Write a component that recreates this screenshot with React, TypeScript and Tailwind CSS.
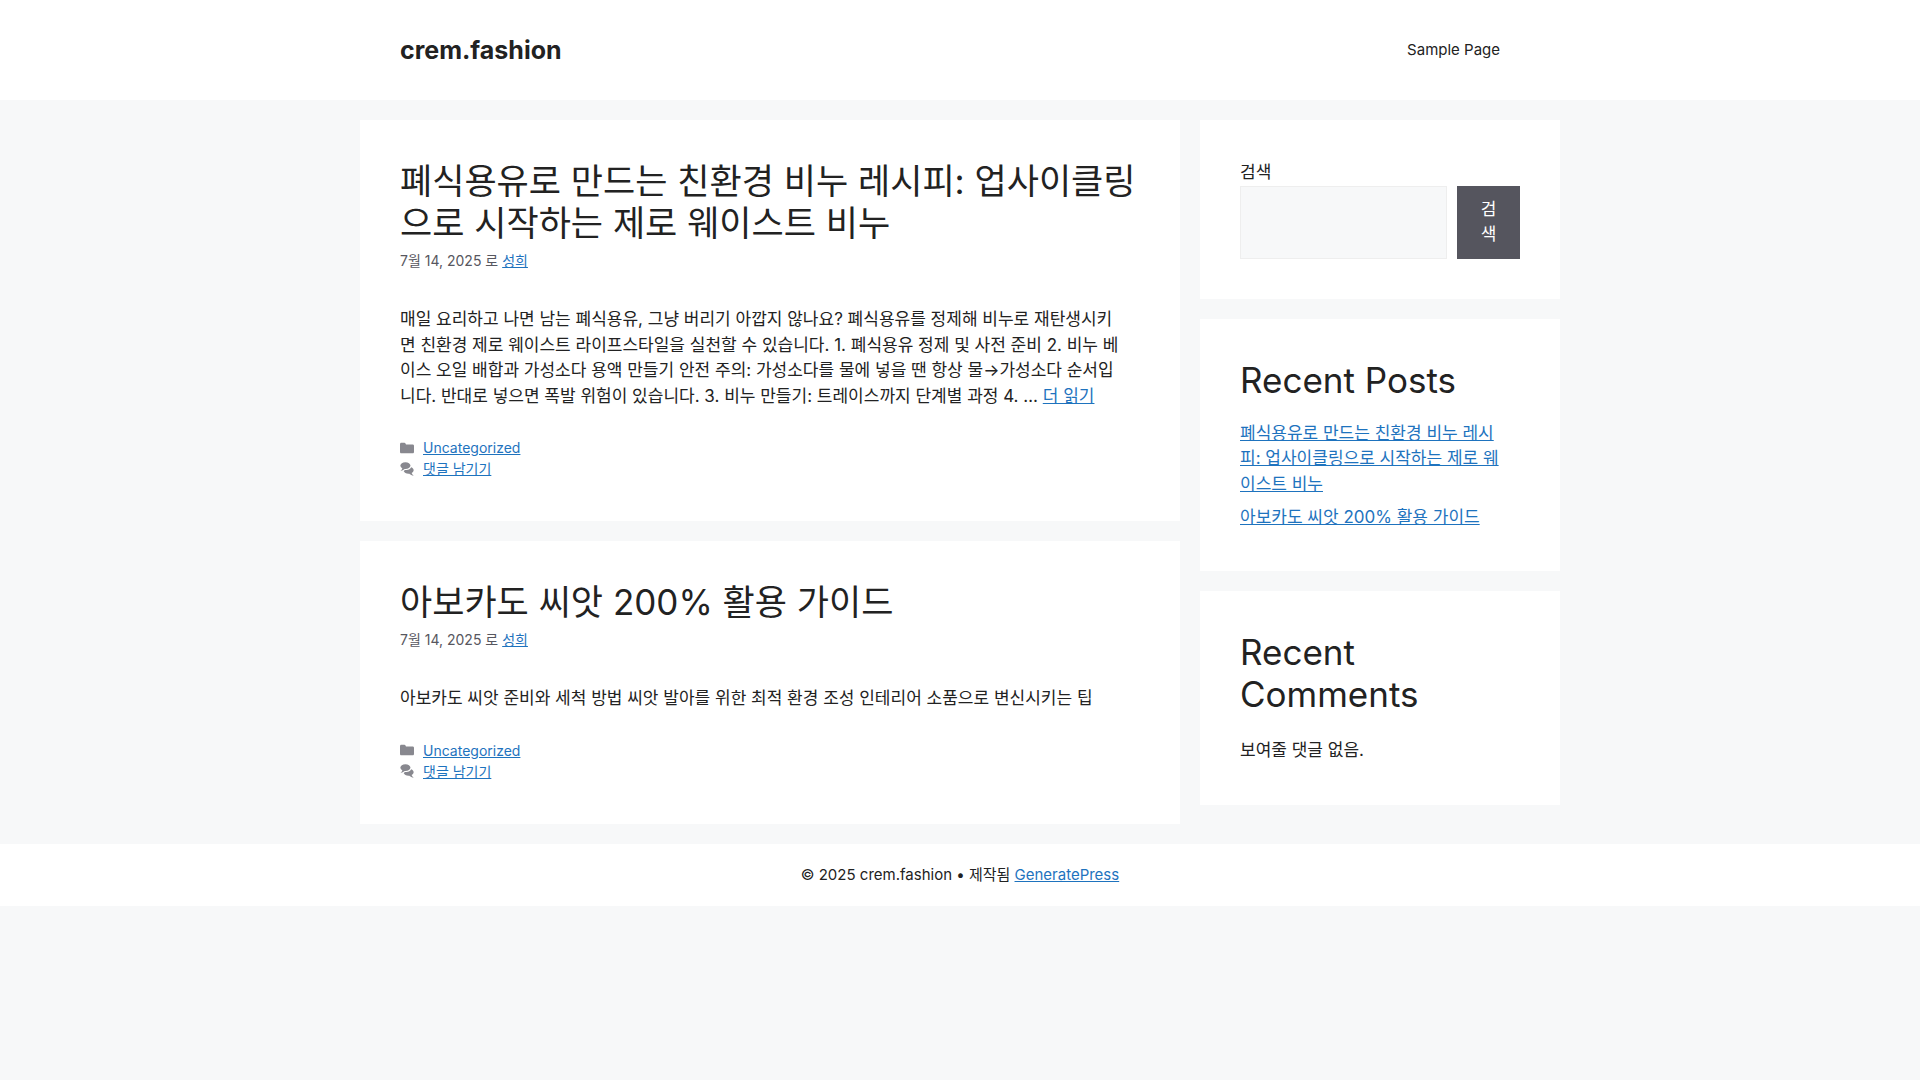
import type { ReactNode } from "react";

const link = "text-[#1e73be] underline";

function FolderIcon() {
  return (
    <svg viewBox="0 0 512 512" className="h-[14px] w-[14px] fill-current" aria-hidden="true">
      <path d="M0 112c0-26.510 21.490-48 48-48h110.014a48 48 0 0143.592 27.907l12.349 26.791A16 16 0 00228.486 128H464c26.510 0 48 21.490 48 48v224c0 26.510-21.490 48-48 48H48c-26.510 0-48-21.490-48-48V112z" />
    </svg>
  );
}

function CommentsIcon() {
  return (
    <svg viewBox="0 0 512 512" className="h-[14px] w-[14px] fill-current" aria-hidden="true">
      <path d="M132.838 329.973a435.298 435.298 0 0016.769-9.004c13.363-7.574 26.587-16.142 37.419-25.507 7.544.597 15.270.925 23.098.925 54.905 0 105.634-15.311 143.285-41.280 23.728-16.365 43.115-37.692 54.155-62.645 54.739 22.205 91.498 63.272 91.498 110.286 0 42.186-29.558 79.498-75.090 102.828 23.460 49.216 75.090 101.709 75.090 101.709s-115.837-38.350-154.424-78.460c-9.956 1.120-20.297 1.758-30.793 1.758-88.727 0-162.927-43.071-181.007-100.610z" />
      <path d="M383.371 132.502c0 70.603-82.961 127.787-185.216 127.787-10.496 0-20.837-.639-30.793-1.757-38.587 40.093-154.424 78.429-154.424 78.429s51.630-52.472 75.090-101.670c-45.532-23.321-75.090-60.619-75.090-102.790C12.938 61.900 95.900 4.716 198.155 4.716 300.410 4.715 383.370 61.900 383.370 132.502z" />
    </svg>
  );
}

function Post({ title, children }: { title: string; children: ReactNode }) {
  return (
    <article className="bg-white px-10 pt-10 pb-[42px]">
      <h2 className="text-[35px] leading-[42px]">
        <a href="#post">{title}</a>
      </h2>
      <p className="mt-1.5 text-[14px] leading-[21px] text-[#575760]">
        7월 14, 2025 로 <a href="#author" className={link}>성희</a>
      </p>
      <p className="mt-9">{children}</p>
      <footer className="mt-7 flex flex-col text-[14px] leading-[21px] text-[#575760]">
        <div className="flex items-center gap-[9px]">
          <span className="opacity-70"><FolderIcon /></span>
          <a href="#category" className={link}>Uncategorized</a>
        </div>
        <div className="flex items-center gap-[9px]">
          <span className="opacity-70"><CommentsIcon /></span>
          <a href="#comments" className={link}>댓글 남기기</a>
        </div>
      </footer>
    </article>
  );
}

export default function App() {
  return (
    <div className="min-h-screen bg-[#f7f8f9] font-[Inter,'Noto_Sans_CJK_KR',sans-serif] text-[17px] leading-normal text-[#222222]">
      <header className="bg-white">
        <div className="mx-auto flex max-w-[1200px] items-center justify-between px-10 py-5">
          <a href="#home" className="text-[25px] leading-[30px] font-bold">crem.fashion</a>
          <nav className="text-[15px] leading-[60px]">
            <a href="#sample" className="block px-5">Sample Page</a>
          </nav>
        </div>
      </header>
      <div className="mx-auto grid max-w-[1200px] grid-cols-[minmax(0,41fr)_minmax(0,18fr)] items-start gap-5 py-5">
        <main className="flex flex-col gap-5">
          <Post title="폐식용유로 만드는 친환경 비누 레시피: 업사이클링으로 시작하는 제로 웨이스트 비누">
            매일 요리하고 나면 남는 폐식용유, 그냥 버리기 아깝지 않나요? 폐식용유를 정제해 비누로 재탄생시키
            <br />
            면 친환경 제로 웨이스트 라이프스타일을 실천할 수 있습니다. 1. 폐식용유 정제 및 사전 준비 2. 비누 베
            <br />
            이스 오일 배합과 가성소다 용액 만들기 안전 주의: 가성소다를 물에 넣을 땐 항상 물→가성소다 순서입
            <br />
            니다. 반대로 넣으면 폭발 위험이 있습니다. 3. 비누 만들기: 트레이스까지 단계별 과정 4. … <a href="#more" className={link}>더 읽기</a>
          </Post>
          <Post title="아보카도 씨앗 200% 활용 가이드">
            아보카도 씨앗 준비와 세척 방법 씨앗 발아를 위한 최적 환경 조성 인테리어 소품으로 변신시키는 팁
          </Post>
        </main>
        <aside className="flex flex-col gap-5">
          <form className="bg-white p-10" onSubmit={(e) => e.preventDefault()}>
            <label htmlFor="search" className="block">검색</label>
            <div className="flex">
              <input id="search" type="search" className="min-w-0 flex-1 border border-[#eeeeee] bg-[#f7f8f9] px-5" />
              <button type="submit" className="ml-[10px] w-[63px] border border-[#55555e] bg-[#55555e] px-5 py-[10px] text-white">검색</button>
            </div>
          </form>
          <section className="bg-white p-10">
            <h2 className="text-[35px] leading-[42px]">Recent Posts</h2>
            <ul className="mt-5 flex flex-col gap-2">
              <li>
                <a href="#post-1" className={link}>
                  폐식용유로 만드는 친환경 비누 레시
                  <br />
                  피: 업사이클링으로 시작하는 제로 웨
                  <br />
                  이스트 비누
                </a>
              </li>
              <li><a href="#post-2" className={link}>아보카도 씨앗 200% 활용 가이드</a></li>
            </ul>
          </section>
          <section className="bg-white p-10">
            <h2 className="text-[35px] leading-[42px]">Recent Comments</h2>
            <p className="mt-5 leading-[30px]">보여줄 댓글 없음.</p>
          </section>
        </aside>
      </div>
      <footer className="bg-white px-10 py-5 text-center text-[15px]">
        © 2025 crem.fashion • 제작됨 <a href="#theme" className={link}>GeneratePress</a>
      </footer>
    </div>
  );
}
